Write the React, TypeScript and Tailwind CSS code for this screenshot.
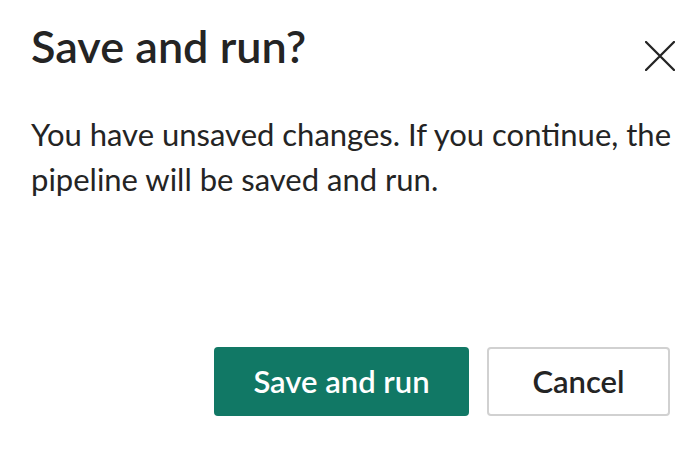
import React from 'react';

const font = { fontFamily: 'Lato, "Open Sans", sans-serif' };

const DismissIcon = () => (
    <svg width="30" height="30" viewBox="0 0 30 30" fill="none">
        <path d="M1 1 L29 29 M29 1 L1 29" stroke="#242424" strokeWidth="2.3" strokeLinecap="round" />
    </svg>
);

export default function App() {
    return (
        <div
            className="w-[700px] h-[459px] bg-white text-[#242424] flex flex-col pl-[31px] pr-[30px] pb-[43px] overflow-hidden"
            style={font}
        >
            <div className="flex items-start justify-between pt-[16px]">
                <h2 className="text-[45px] leading-[61px] font-semibold">Save and run?</h2>
                <button className="mt-[25px] mr-[-5px] flex items-center justify-center">
                    <DismissIcon />
                </button>
            </div>

            <p className="mt-[35px] text-[31px] leading-[45px] w-[650px]">
                You have unsaved changes. If you continue, the pipeline will be saved and run.
            </p>

            <div className="mt-auto flex justify-end gap-[18px]">
                <button className="w-[255px] h-[69px] rounded-[4px] bg-[#117865] text-white text-[31px] font-semibold">
                    Save and run
                </button>
                <button className="w-[183px] h-[69px] rounded-[4px] border-2 border-[#d1d1d1] bg-white text-[31px] font-semibold">
                    Cancel
                </button>
            </div>
        </div>
    );
}
